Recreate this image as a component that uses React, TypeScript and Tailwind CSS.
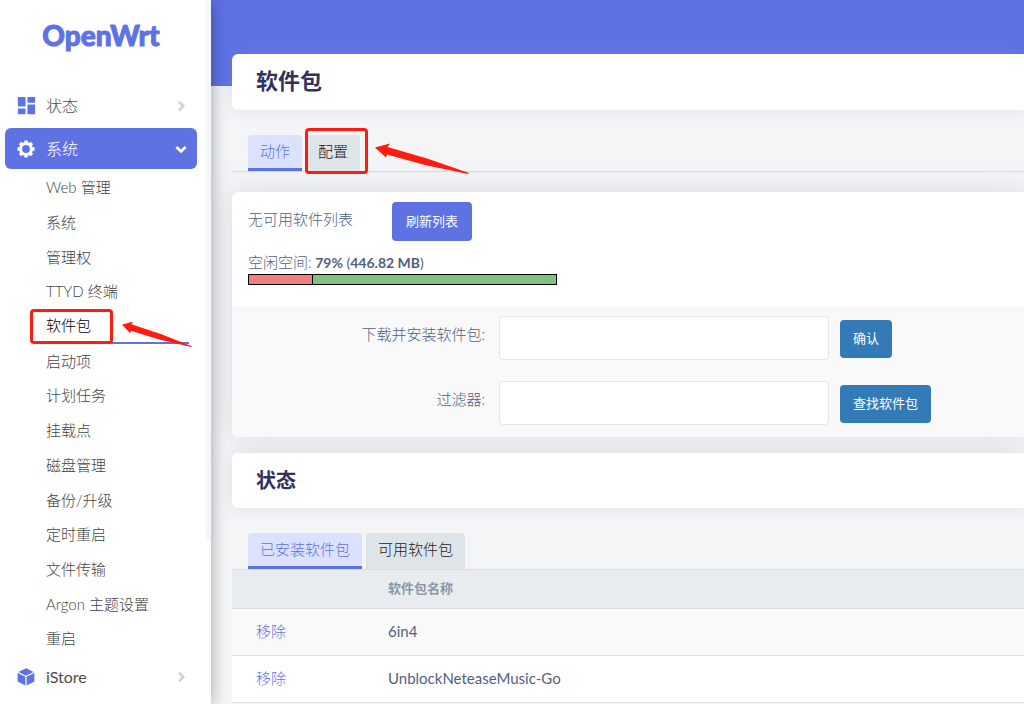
import React from 'react';
import { MdDashboard } from 'react-icons/md';
import clsx from 'clsx';

const systemMenu = [
  'Web 管理',
  '系统',
  '管理权',
  'TTYD 终端',
  '软件包',
  '启动项',
  '计划任务',
  '挂载点',
  '磁盘管理',
  '备份/升级',
  '定时重启',
  '文件传输',
  'Argon 主题设置',
  '重启',
];

const packages = ['6in4', 'UnblockNeteaseMusic-Go'];

function CubeIcon() {
  return (
    <svg viewBox="0 0 18 18" className="h-[18px] w-[18px]" fill="currentColor" aria-hidden="true">
      <path d="M9 0.2 L16.6 3.9 L9 7.7 L1.4 3.9 Z" />
      <path d="M0.6 4.9 L8.4 8.8 V17.5 L0.6 13.6 Z" />
      <path d="M17.4 4.9 L9.6 8.8 V17.5 L17.4 13.6 Z" />
    </svg>
  );
}

function GearIcon() {
  return (
    <svg viewBox="0 0 18 18" className="h-[18px] w-[18px]" fill="none" stroke="currentColor" aria-hidden="true">
      <circle cx="9" cy="9" r="5.4" strokeWidth="3" />
      <path
        d="M9 0.5 V3 M9 15 V17.5 M0.5 9 H3 M15 9 H17.5 M3 3 L4.8 4.8 M13.2 13.2 L15 15 M15 3 L13.2 4.8 M4.8 13.2 L3 15"
        strokeWidth="3.4"
      />
    </svg>
  );
}

function Chevron({ open }: { open?: boolean }) {
  return (
    <svg
      viewBox="0 0 12 12"
      className={clsx('h-3 w-3', open ? 'text-white' : 'text-[#ced4da]')}
      fill="none"
      stroke="currentColor"
      strokeWidth="2.8"
      aria-hidden="true"
    >
      <path d={open ? 'M1.4 4 L6 8.4 L10.6 4' : 'M4 1.6 L8.2 6 L4 10.4'} />
    </svg>
  );
}

function Arrow({ className }: { className: string }) {
  return (
    <svg viewBox="0 0 94 31" preserveAspectRatio="none" className={clsx('absolute z-10', className)} aria-hidden="true">
      <path d="M0 4.5 L15 0.5 L12.5 4 L52 15.5 L94 30 L93 31 L50 22 L12 11.5 L11 14.5 Z" fill="#fd1c0e" />
    </svg>
  );
}

function NavItem({ icon, label, active }: { icon: React.ReactNode; label: string; active?: boolean }) {
  return (
    <a
      href="#"
      className={clsx(
        'flex h-[41px] items-center rounded-md pl-3 pr-[10px] text-base',
        active ? 'bg-[#5e72e4] text-white' : 'text-[#4d4d4d]'
      )}
    >
      <span className={clsx('flex w-[29px] items-center', !active && 'text-[#5e72e4]')}>{icon}</span>
      <span className={clsx('flex-1', label !== 'iStore' && 'font-light')}>{label}</span>
      <Chevron open={active} />
    </a>
  );
}

function Sidebar() {
  return (
    <aside className="relative z-10 w-[211px] shrink-0 bg-white pl-[5px] pr-[14px] shadow-[0_0_16px_rgba(0,0,0,0.35)]">
      <div className="absolute right-0 top-0 h-[542px] w-[5px] bg-[#f3f7fb]" />
      <a
        href="#"
        className="flex h-[85px] items-center justify-center pb-4 font-['Lato'] text-[28px] font-black text-[#5e72e4] [-webkit-text-stroke:1px_#5e72e4]"
      >
        OpenWrt
      </a>
      <nav className="flex flex-col">
        <NavItem icon={<MdDashboard className="-ml-0.5 h-[23px] w-[23px]" />} label="状态" />
        <div className="mt-0.5">
          <NavItem active icon={<GearIcon />} label="系统" />
        </div>
        <ul className="mt-px grid h-[486px] auto-rows-fr text-[15px] font-light text-[#444]">
          {systemMenu.map((item) => (
            <li key={item} className="relative ml-[41px] mr-2">
              <a
                href="#"
                className={clsx('flex h-full items-center', item === '软件包' && 'border-b-2 border-[#5e72e4] text-black')}
              >
                {item}
              </a>
              {item === '软件包' && (
                <>
                  <span className="absolute -left-4 top-0 h-[35px] w-[83px] rounded border-[3px] border-[#fd1c0e]" />
                  <Arrow className="left-[76px] top-3 h-[26px] w-[70px]" />
                </>
              )}
            </li>
          ))}
        </ul>
        <NavItem icon={<CubeIcon />} label="iStore" />
      </nav>
    </aside>
  );
}

function Tab({ label, active, marked }: { label: string; active?: boolean; marked?: boolean }) {
  return (
    <li className="relative">
      <button
        type="button"
        className={clsx(
          'h-9 rounded-t px-3 text-[15px] font-light',
          active ? 'border-b-[3px] border-[#5e72e4] bg-[#dce1fe] text-[#5e72e4]' : 'bg-[#dde4ea] pb-1 text-[#222]'
        )}
      >
        {label}
      </button>
      {marked && (
        <>
          <span className="absolute -left-px -top-[7px] h-[46px] w-[63px] rounded border-[3px] border-[#fd1c0e]" />
          <Arrow className="left-[69px] top-2 h-[31px] w-[94px]" />
        </>
      )}
    </li>
  );
}

export default function App() {
  return (
    <div className="flex h-screen overflow-hidden bg-[#f4f5f7] font-[Lato,'Noto_Sans_CJK_SC',sans-serif] text-[15px] text-[#525f7f]">
      <Sidebar />
      <main className="min-w-0 flex-1">
        <div className="h-[86px] bg-[#5e72e4]" />
        <div className="-mt-8 pl-[21px]">
          <h2 className="flex h-14 items-center rounded-l-md bg-white px-6 pb-[3px] text-[22px] font-bold text-[#32325d] shadow-[0_0_16px_rgba(136,152,170,0.2)]">
            软件包
          </h2>
          <ul className="mt-[25px] flex gap-1 border-b border-[#d9dcdf] pl-4">
            <Tab label="动作" active />
            <Tab label="配置" marked />
          </ul>

          <section className="mt-5 overflow-hidden rounded-l-md bg-white shadow-[0_0_32px_rgba(136,152,170,0.25)]">
            <div className="px-4 pb-[22px] pt-[10px]">
              <div className="flex items-center">
                <span className="w-36 pb-1 font-light">无可用软件列表</span>
                <button type="button" className="h-[39px] rounded bg-[#5e72e4] px-[14px] text-[13px] text-white">
                  刷新列表
                </button>
              </div>
              <div className="mt-[10px] text-sm leading-[22px]">
                <span className="text-[15px] font-light">空闲空间:</span> <strong>79%</strong> (<strong>446.82 MB</strong>)
              </div>
              <div className="h-[11px] w-[309px] border border-black bg-[#80c080]">
                <div className="h-full w-[21%] border-r border-black bg-[#f08080]" />
              </div>
            </div>
            <form className="grid grid-cols-[253px_330px_1fr] gap-y-[21px] bg-[#f9f9f9] pb-3 pt-[9px]">
              <label htmlFor="url" className="pt-[7px] text-right font-light">
                下载并安装软件包:
              </label>
              <input id="url" type="text" className="ml-[14px] h-11 w-[330px] rounded border border-[#e3e6ea] bg-white px-3" />
              <div className="pl-[25px] pt-1">
                <button type="button" className="h-[38px] rounded bg-[#337ab7] px-[13px] text-[13px] text-white">
                  确认
                </button>
              </div>
              <label htmlFor="query" className="pt-[7px] text-right font-light">
                过滤器:
              </label>
              <input id="query" type="text" className="ml-[14px] h-11 w-[330px] rounded border border-[#e3e6ea] bg-white px-3" />
              <div className="pl-[25px] pt-1">
                <button type="button" className="h-[38px] rounded bg-[#337ab7] px-[13px] text-[13px] text-white">
                  查找软件包
                </button>
              </div>
            </form>
          </section>

          <h2 className="mt-4 flex h-[55px] items-center rounded-l-md bg-white px-6 pb-0.5 text-xl font-bold text-[#32325d] shadow-[0_0_16px_rgba(136,152,170,0.2)]">
            状态
          </h2>
          <ul className="mt-[25px] flex gap-1 border-b border-[#d9dcdf] pl-4">
            <Tab label="已安装软件包" active />
            <Tab label="可用软件包" />
          </ul>
          <table className="w-full border-collapse text-left">
            <thead>
              <tr className="h-[38px] border-b border-[#d9dcdf] bg-[#e8ecef] text-[13px] text-[#8898aa]">
                <th className="w-[156px]" />
                <th className="font-bold">软件包名称</th>
              </tr>
            </thead>
            <tbody>
              {packages.map((name, i) => (
                <tr key={name} className={clsx('h-[47px] border-b border-[#dee2e6]', i % 2 ? 'bg-white' : 'bg-[#f9f9f9]')}>
                  <td className="pl-6">
                    <a href="#" className="font-light text-[#5e72e4]">
                      移除
                    </a>
                  </td>
                  <td>{name}</td>
                </tr>
              ))}
            </tbody>
          </table>
        </div>
      </main>
    </div>
  );
}
